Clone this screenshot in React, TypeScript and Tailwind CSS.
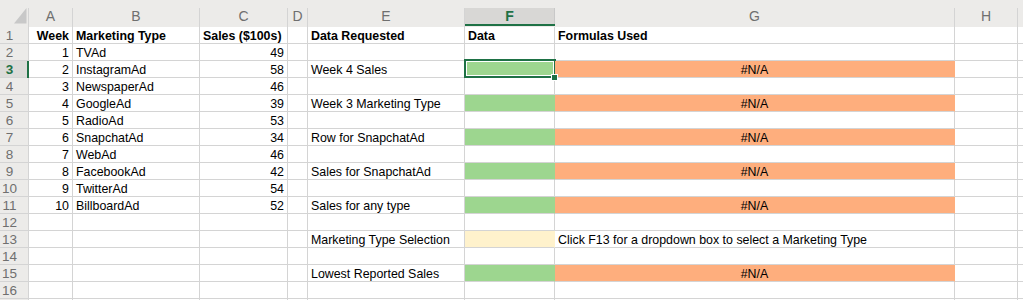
import React from 'react';

const cols = ['A', 'B', 'C', 'D', 'E', 'F', 'G', 'H'];
const widths = ['w-[44px]', 'w-[127px]', 'w-[88px]', 'w-[20px]', 'w-[157px]', 'w-[90px]', 'w-[400px]', 'w-[63px]'];

const ads = [
  ['TVAd', 49],
  ['InstagramAd', 58],
  ['NewspaperAd', 46],
  ['GoogleAd', 39],
  ['RadioAd', 53],
  ['SnapchatAd', 34],
  ['WebAd', 46],
  ['FacebookAd', 42],
  ['TwitterAd', 54],
  ['BillboardAd', 52],
] as const;

const requests: Record<number, string> = {
  3: 'Week 4 Sales',
  5: 'Week 3 Marketing Type',
  7: 'Row for SnapchatAd',
  9: 'Sales for SnapchatAd',
  11: 'Sales for any type',
  13: 'Marketing Type Selection',
  15: 'Lowest Reported Sales',
};

type CellProps = {
  w: string;
  children?: React.ReactNode;
  className?: string;
};

const Cell: React.FC<CellProps> = ({ w, children, className = '' }) => (
  <div
    className={`${w} shrink-0 h-[17px] border-r border-b border-[#d4d4d4] px-[3px] text-[12.4px] leading-[18px] whitespace-nowrap relative ${className}`}
  >
    {children}
  </div>
);

export default function App() {
  const rows = Array.from({ length: 17 }, (_, i) => i + 1);

  return (
    <div className="w-[1023px] h-[300px] overflow-hidden bg-white text-black" style={{ fontFamily: '"Liberation Sans", Arial, sans-serif' }}>
      {/* column headers */}
      <div className="flex h-[27px] bg-[#ecebe9]">
        <div className="w-[29px] shrink-0 relative">
          <svg className="absolute left-0 top-0" width="29" height="27" viewBox="0 0 29 27">
            <polygon points="14,23.5 26.5,23.5 26.5,8" fill="#c8c8c8" />
          </svg>
          <div className="absolute right-0 top-[8px] h-[19px] border-r border-[#d4d4d4]" />
        </div>
        {cols.map((c, i) =>
          c === 'F' ? (
            <div key={c} className={`${widths[i]} shrink-0 pt-[8px]`}>
              <div className="h-[16px] bg-[#d8d7d5] border-r border-[#c8c8c8] flex items-center justify-center text-[14px] font-bold text-[#1e7145]">
                {c}
              </div>
              <div className="h-[2px] bg-[#1e7145]" />
            </div>
          ) : (
            <div key={c} className={`${widths[i]} shrink-0 mt-[8px] h-[19px] border-r border-[#d4d4d4] flex items-start justify-center pt-[1px] text-[14px] leading-[14px] text-[#6f6f6f]`}>
              {c}
            </div>
          )
        )}
        <div className="flex-1" />
      </div>

      {rows.map((r) => {
        const ad = r >= 2 && r <= 11 ? ads[r - 2] : null;
        const req = requests[r];
        const filled = req && r !== 13;
        const bold = r === 1 ? 'font-bold' : '';
        return (
          <div key={r} className="flex">
            <div
              className={`w-[29px] shrink-0 h-[17px] border-b border-r border-[#d4d4d4] relative ${r === 3 ? 'bg-[#dcdbd9]' : 'bg-[#ecebe9]'}`}
            >
              {r < 17 && (
                <div className={`w-[19px] text-center text-[13.5px] leading-[17px] ${r === 3 ? 'font-bold text-[#1e7145]' : 'text-[#6f6f6f]'}`}>{r}</div>
              )}
              {r === 3 && <div className="absolute right-[-1px] top-0 w-[2px] h-[18px] bg-[#1e7145]" />}
            </div>
            <Cell w={widths[0]} className={`text-right ${bold}`}>
              {r === 1 ? 'Week' : ad ? r - 1 : ''}
            </Cell>
            <Cell w={widths[1]} className={bold}>
              {r === 1 ? 'Marketing Type' : ad ? ad[0] : ''}
            </Cell>
            <Cell w={widths[2]} className={r === 1 ? 'font-bold' : 'text-right'}>
              {r === 1 ? 'Sales ($100s)' : ad ? ad[1] : ''}
            </Cell>
            <Cell w={widths[3]} />
            <Cell w={widths[4]} className={bold}>
              {r === 1 ? 'Data Requested' : req ?? ''}
            </Cell>
            <Cell
              w={widths[5]}
              className={`${bold} ${filled ? 'bg-[#9dd68f] border-r-[#9dd68f]' : r === 13 ? 'bg-[#fff2cc] border-r-[#fff2cc]' : ''}`}
            >
              {r === 1 ? 'Data' : ''}
              {r === 3 && (
                <>
                  <div className="absolute -left-[1px] -top-[2px] w-[92px] h-[19px] border-2 border-[#1e7145] shadow-[inset_0_0_0_1px_#ffffff]" />
                  <div className="absolute left-[87px] top-[14px] w-[5px] h-[5px] bg-[#1e7145] outline outline-1 outline-white z-10" />
                </>
              )}
            </Cell>
            <Cell
              w={widths[6]}
              className={`${bold} ${filled ? 'bg-[#feae7d] border-r-[#feae7d] text-center' : ''}`}
            >
              {r === 1 ? 'Formulas Used' : filled ? '#N/A' : r === 13 ? 'Click F13 for a dropdown box to select a Marketing Type' : ''}
            </Cell>
            <Cell w={widths[7]} />
            <div className="flex-1 h-[17px] border-b border-[#d4d4d4]" />
          </div>
        );
      })}
    </div>
  );
}
